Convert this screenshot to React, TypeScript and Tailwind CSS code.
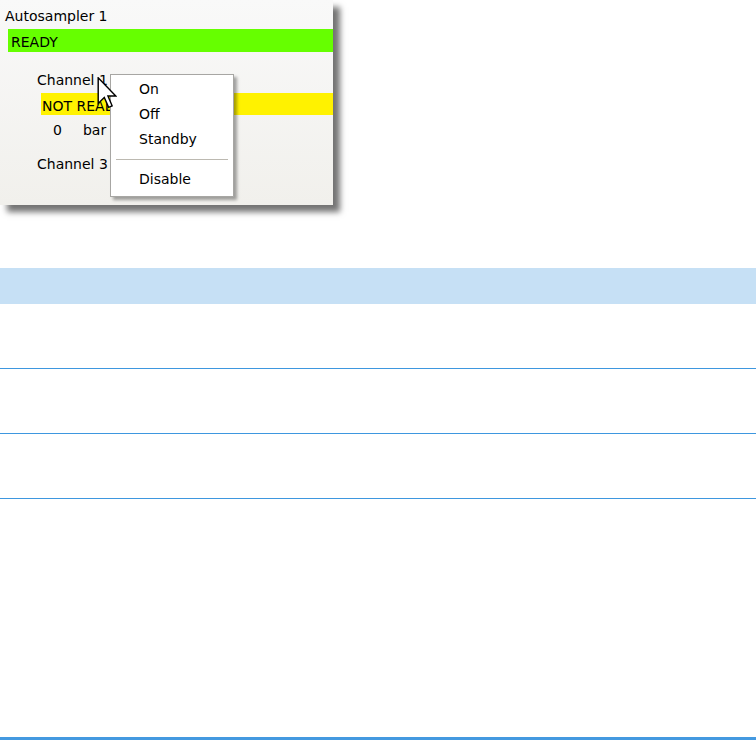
import React from "react";

const font = { fontFamily: '"DejaVu Sans", Verdana, sans-serif' };

function Cursor() {
  return (
    <svg
      className="absolute left-[97px] top-[77px]"
      width="20"
      height="32"
      viewBox="0 0 12 20"
    >
      <path
        d="M0.5 0.5 L0.5 16.5 L4.3 12.8 L7 19 L9.2 18 L6.6 11.9 L11.5 11.9 Z"
        fill="#ffffff"
        stroke="#000000"
        strokeWidth="0.9"
        strokeLinejoin="miter"
      />
    </svg>
  );
}

function Menu() {
  return (
    <div className="absolute left-[110px] top-[74px] w-[124px] border border-[#a7a6a3] bg-white pt-[2px] pb-[4px] shadow-[3px_3px_3px_rgba(0,0,0,0.35)]">
      <div className="h-[25px] pl-[28px] leading-[25px]">On</div>
      <div className="h-[25px] pl-[28px] leading-[25px]">Off</div>
      <div className="h-[25px] pl-[28px] leading-[25px]">Standby</div>
      <div className="mx-[5px] mt-[7px] mb-[7px] h-px bg-[#bcb9b1]" />
      <div className="h-[25px] pl-[28px] leading-[25px]">Disable</div>
    </div>
  );
}

function Panel() {
  return (
    <div className="relative h-[205px] w-[333px] bg-gradient-to-b from-[#f9f9f9] to-[#f1f0ec] shadow-[7px_7px_6px_rgba(0,0,0,0.55)] text-[14px] text-black">
      <div className="pl-[5px] pt-[8px] leading-[17px]">Autosampler 1</div>
      <div className="ml-[8px] mt-[4px] h-[23px] bg-[#66ff00] pl-[3px] leading-[26px]">
        READY
      </div>
      <div className="mt-[20px] pl-[37px] leading-[17px]">Channel 1</div>
      <div className="ml-[41px] mt-[4px] h-[22px] overflow-hidden bg-[#fff200] pl-[1px] leading-[26px]">
        NOT READY
      </div>
      <div className="mt-[7px] flex pl-[53px] leading-[17px]">
        <span>0</span>
        <span className="ml-[21px]">bar</span>
      </div>
      <div className="mt-[17px] pl-[37px] leading-[17px]">Channel 3</div>
      <Menu />
      <Cursor />
    </div>
  );
}

export default function App() {
  return (
    <div className="h-[740px] w-[756px] overflow-hidden bg-white" style={font}>
      <div className="h-[268px]">
        <Panel />
      </div>
      <div className="h-[36px] bg-[#c6e0f5]" />
      <div className="h-[65px] border-b border-[#3e97df]" />
      <div className="h-[65px] border-b border-[#3e97df]" />
      <div className="h-[65px] border-b border-[#3e97df]" />
      <div className="h-[238px]" />
      <div className="h-[3px] bg-[#4499e0]" />
    </div>
  );
}
